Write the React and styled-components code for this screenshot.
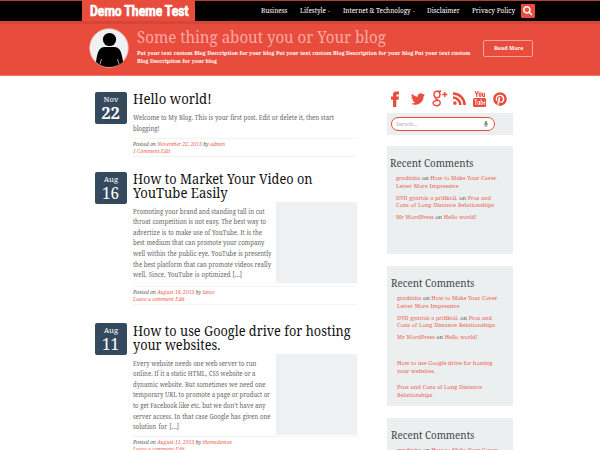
import React from 'react';
import styled, { createGlobalStyle, css } from 'styled-components';
import { FaTwitter, FaPinterest, FaSearch, FaMicrophone } from 'react-icons/fa';

// Sets a line to an exact measure with narrowed letterforms.
const measure = (w, s) => css`
  display: block; width: ${w / s}px; margin-right: ${w - w / s}px;
  white-space: nowrap; text-align-last: justify;
  transform: scaleX(${s}); transform-origin: 0 50%;
`;

const Global = createGlobalStyle`
  * { box-sizing: border-box; }
  html, body { margin: 0; height: 450px; overflow: hidden; background: #fff; }
  body { font-family: "Noto Serif", "Droid Serif", "DejaVu Serif Condensed", "DejaVu Serif", serif; font-stretch: condensed; color: #555; }
`;
const Page = styled.div`width: 600px; height: 450px; overflow: hidden;`;
const TopBar = styled.header`
  height: 21px; background: #000; border-top: 1px solid #b83a2e;
  display: flex; padding-left: 82px;
`;
const Logo = styled.div`
  width: 113px; height: 21px; margin-top: -1px; padding: 1px 0 0 8px; background: #e84c3d; color: #fff; flex: none;
  font: 700 15.5px/21px Roboto, "Liberation Sans", sans-serif;
`;
const LogoText = styled.span`${measure(97.5, 0.78)} -webkit-text-stroke: 0.7px #fff;`;
const Nav = styled.nav`display: flex; padding-left: 66px; height: 19px; align-items: center; color: #fff;`;
const NavItem = styled.a`padding-right: ${p => p.$gap}px; font-size: 7.1px; line-height: 19px;`;
const Caret = styled.i`box-sizing: content-box; width: 0; border: 1.5px solid transparent; border-top-color: #bbb; margin: 2px ${p => p.$gap}px 0 0;`;
const SearchButton = styled.button`
  width: 14px; height: 14px; margin-top: 1px; padding: 0; border: 0; border-radius: 1px; background: #e84c3d; color: #fff;
  display: flex; align-items: center; justify-content: center; font-size: 9.5px;
`;
const Hero = styled.section`
  height: 55px; background: #e84c3d; border-top: 3px solid #d54637; border-bottom: 1px solid #ee7468; padding: 4px 0 0 89px; display: flex;
`;
const Avatar = styled.svg`width: 40px; height: 40px; flex: none;`;
const HeroText = styled.div`width: 346.5px; padding-left: 7.5px; color: #fff; flex: none;`;
const HeroTitle = styled.h1`margin: 0; padding-top: 1px; font-size: 15.4px; font-weight: 400; line-height: 17px; color: #f8aaa3;`;
const HeroCopy = styled.div`padding-top: 2.5px; font-size: 5.9px; line-height: 8px; font-weight: 700;`;
const ReadMore = styled.a`
  width: 50px; height: 17px; margin: 12px 0 0 7.5px; padding-left: 10px; border: 1px solid #f7a49c; border-radius: 2px; color: #fff;
  font-size: 6px; line-height: 15px; font-weight: 700;
`;
const Content = styled.main`display: flex; padding-left: 95px;`;
const Posts = styled.div`width: 262px; padding-top: 16px; flex: none;`;
const Post = styled.article`display: flex; height: ${p => p.$h}px;`;
const DateBadge = styled.time`
  flex: none; width: 32px; height: 32px; margin-right: 5.5px; border-radius: 2px; background: #34495e; color: #fff;
  display: flex; flex-direction: column; align-items: center; padding-top: 3px;
`;
const Month = styled.span`font-size: 7.7px; line-height: 9px;`;
const Day = styled.span`
  font-size: 17px; line-height: 18px; font-weight: ${p => p.$bold ? 700 : 400};
  transform: scaleX(${p => p.$bold ? 0.98 : 0.9});
`;
const PostBody = styled.div`width: 224.5px; flex: none;`;
const Title = styled.h2`margin: 0; padding-top: ${p => p.$pad || 0}px; font-size: 13.9px; line-height: 13.8px; font-weight: 400; color: #111;`;
const Line = styled.span`${p => measure(p.$w, p.$s || 0.9)}`;
const Excerpt = styled.div`display: flex; justify-content: space-between; height: ${p => p.$h}px;`;
const Copy = styled.div`padding-top: ${p => p.$pad}px; font-size: 6.2px; line-height: 10.62px; color: #666;`;
const Thumb = styled.div`flex: none; width: 81px; height: 81px; margin-top: ${p => p.$top}px; background: #eff0f2;`;
const Meta = styled.div`
  border-top: 1px solid #f3f3f3; border-bottom: 1px solid #f3f3f3; height: 19px; padding-top: 2px;
  font-size: 5.6px; line-height: 7px; font-style: italic; color: #555;
`;
const Link = styled.a`color: #ec5b4d;`;
const Sidebar = styled.aside`width: 125.5px; margin-left: 30px; padding-top: 14px; flex: none;`;
const Socials = styled.div`
  height: 17px; display: grid; grid-template-columns: 20.5px 20.5px 21px 20.5px 20px auto; align-items: center; color: #e84c3d;
  padding: 0 0 0 3.5px; margin-bottom: 6px;
  svg { display: block; }
`;
const SearchBox = styled.div`height: 22px; background: #ebeff0; padding: 4px 0 0 3.5px; margin-bottom: 11px;`;
const Field = styled.div`
  width: 104.5px; height: 14px; border: 1px solid #e84c3d; border-radius: 7px; background: #fff; color: #aaa;
  display: flex; align-items: center; justify-content: space-between; padding: 0 5px 0 4.5px; font-size: 6px;
`;
const Panel = styled.section`height: ${p => p.$h}px; margin-bottom: 12px; background: #ebeff0; padding: 10.5px 0 0 ${p => p.$x}px;`;
const PanelTitle = styled.h3`margin: 0 0 5.5px; font-size: 10.2px; line-height: 12px; font-weight: 400; color: #444;`;
const Item = styled.div`margin: 0 0 ${p => p.$gap || 4}px 5.8px; font-size: 6.1px; line-height: 7.8px; color: #555;`;

const posts = [
  { h: 80, month: 'Nov', day: '22', bold: true, title: [['Hello world!', 75, 0.95]], copyPad: 7.5, exH: 32,
    copy: [['Welcome to My Blog. This is your first post. Edit or delete it, then start', 201], ['blogging!', 25]],
    date: 'November 22, 2013', by: 'admin', metaW: 90.5, comment: '1 Comment Edit', commentW: 37 },
  { h: 151, month: 'Aug', day: '16', title: [['How to Market Your Video on', 179.5, 0.915], ['YouTube Easily', 94, 0.94]], copyPad: 7, exH: 86, thumb: 2,
    copy: [['Promoting your brand and standing tall in cut', 131], ['throat competition is not easy. The best way to', 133], ['advertize is to make use of YouTube. It is the', 129], ['best medium that can promote your company', 131.5], ['well within the public eye. YouTube is presently', 138.5], ['the best platform that can promote videos really', 137.5], ['well. Since, YouTube is optimized […]', 109]],
    date: 'August 16, 2013', by: 'lance', metaW: 79, comment: 'Leave a comment Edit', commentW: 51 },
  { h: 151, month: 'Aug', day: '11', title: [['How to use Google drive for hosting', 217.5, 0.915], ['your websites.', 87, 0.915]], copyPad: 7, exH: 84.5, thumb: 2, titlePad: 1,
    copy: [['Every website needs one web server to run', 123.5], ['online. If it a static HTML, CSS website or a', 122.5], ['dynamic website. But sometimes we need one', 132.5], ['temporary URL to promote a page or product or', 136.5], ['to get Facebook like etc. but we don’t have any', 132.5], ['server access. In that case Google has given one', 137.5], ['solution for […]', 46]],
    date: 'August 11, 2013', by: 'themedemos', metaW: 96.5, comment: 'Leave a comment Edit', commentW: 51 },
];

function Comments() {
  return <>
    <PanelTitle><Line $w={83} $s={0.96}>Recent Comments</Line></PanelTitle>
    <Item>
      <Line $w={100} $s={0.92}><Link>gradinita</Link> on <Link>How to Make Your Cover</Link></Line>
      <Line $w={62.5}><Link>Letter More Impressive</Link></Line>
    </Item>
    <Item>
      <Line $w={95}><Link>DVD gyártás a prifiktól.</Link> on <Link>Pros and</Link></Line>
      <Line $w={98} $s={0.92}><Link>Cons of Long Distance Relationships</Link></Line>
    </Item>
    <Item $gap={18.5}><Line $w={80.5}><Link>Mr WordPress</Link> on <Link>Hello world!</Link></Line></Item>
  </>;
}

const NavLink = ({ w, gap, children }) => <NavItem $gap={gap}><Line $w={w} $s={0.9}>{children}</Line></NavItem>;

export default function App() {
  return (
    <Page>
      <Global />
      <TopBar>
        <Logo><LogoText>Demo Theme Test</LogoText></Logo>
        <Nav>
          <NavLink w={27} gap={11.5}>Business</NavLink>
          <NavLink w={25.5} gap={3}>Lifestyle</NavLink><Caret $gap={12.5} />
          <NavLink w={67.5} gap={2.5}>Internet &amp; Technology</NavLink><Caret $gap={12.5} />
          <NavLink w={34} gap={11}>Disclaimer</NavLink>
          <NavLink w={43} gap={6}>Privacy Policy</NavLink>
          <SearchButton aria-label="Search"><FaSearch /></SearchButton>
        </Nav>
      </TopBar>
      <Hero>
        <Avatar viewBox="0 0 40 40">
          <circle cx="20" cy="20" r="19.3" fill="#f0f1f3" stroke="#f8b1aa" strokeWidth=".8" />
          <circle cx="20.5" cy="11.5" r="6.6" />
          <path d="M7 34 Q8 25 10.5 21.5 Q12 19 15 19 H26 Q29 19 30.5 21.5 Q33 25 34 34 Q28 39 20 39 Q12 39 7 34Z" />
          <path d="M12.5 31 L11 36 M28.5 31 L30 36" stroke="#f0f1f3" strokeWidth=".7" />
        </Avatar>
        <HeroText>
          <HeroTitle><Line $w={248.5} $s={0.98}>Some thing about you or Your blog</Line></HeroTitle>
          <HeroCopy>
            <Line $w={333.5} $s={0.89}>Put your text custom Blog Description for your blog Put your text custom Blog Description for your blog Put your text custom</Line>
            <Line $w={79.5} $s={0.89}>Blog Description for your blog</Line>
          </HeroCopy>
        </HeroText>
        <ReadMore><Line $w={29}>Read More</Line></ReadMore>
      </Hero>
      <Content>
        <Posts>
          {posts.map(p => (
            <Post key={p.date} $h={p.h}>
              <DateBadge><Month>{p.month}</Month><Day $bold={p.bold}>{p.day}</Day></DateBadge>
              <PostBody>
                <Title $pad={p.titlePad}>{p.title.map(([t, w, s]) => <Line key={t} $w={w} $s={s}>{t}</Line>)}</Title>
                <Excerpt $h={p.exH}>
                  <Copy $pad={p.copyPad}>{p.copy.map(([t, w]) => <Line key={t} $w={w} $s={0.97}>{t}</Line>)}</Copy>
                  {p.thumb && <Thumb $top={p.thumb} />}
                </Excerpt>
                <Meta>
                  <Line $w={p.metaW} $s={0.9}>Posted on <Link>{p.date}</Link> by <Link>{p.by}</Link></Line>
                  <Line $w={p.commentW} $s={0.9}><Link>{p.comment}</Link></Line>
                </Meta>
              </PostBody>
            </Post>
          ))}
        </Posts>
        <Sidebar>
          <Socials>
            <svg width="9" height="16" viewBox="0 0 9 16" fill="#e84c3d">
              <path d="M2 16V8.7H0V5.6H2V3.8Q2 .5 5.4 .5H8V3.5H6.3Q5.3 3.5 5.3 4.5V5.6H8L7.6 8.7H5.3V16Z" />
            </svg>
            <FaTwitter size={14} />
            <svg width="16" height="17" viewBox="0 0 16 17" fill="none" stroke="#e84c3d" strokeWidth="1.4">
              <path d="M9.3 1.2H5.2M5.2 1.2C3 1.2 2 2.6 2 4.4S3 7.6 5 7.6 8 6.2 8 4.4 7.2 1.2 5.2 1.2M4.6 7.6C3.2 9 4.2 9.6 6 10.2 9.6 11.4 8.6 15.8 4.8 15.8S.2 12.5 2.4 11.2Q4 10.3 6 10.2M12.8 2V7M10.2 4.5H15.4" />
            </svg>
            <svg width="13" height="13" viewBox="0 0 13 13" fill="none" stroke="#e84c3d" strokeWidth="2.5">
              <circle cx="1.9" cy="11.1" r="1.8" fill="#e84c3d" stroke="none" />
              <path d="M0 5.6A7.4 7.4 0 0 1 7.4 13M0 1.4A11.6 11.6 0 0 1 11.6 13" />
            </svg>
            <svg width="13" height="16" viewBox="0 0 13 16">
              <path d="M2 0 3.7 3.5V6M5.3 0 3.7 3.5M6.2 2.3Q7.2 1.2 8 2.3V4.7Q7.1 6 6.2 4.7ZM9.5 1.7V5Q10.3 6 11.4 4.8V1.7V6" fill="none" stroke="#e84c3d" strokeWidth="1.1" />
              <rect y="7" width="13" height="9" rx="1.5" fill="#e84c3d" />
              <path d="M1.2 8.8H4.2M2.7 8.8V14M4.8 10V13.3Q5.8 14 6.6 13V10V14M8 8V14M8 10.5Q9.4 9.8 9.4 11V13Q9 14 8 13.4M12 13Q10.7 14.6 10.7 12.5V11Q12 9.5 12 12H10.7" fill="none" stroke="#fff" strokeWidth=".7" />
            </svg>
            <FaPinterest size={14} />
          </Socials>
          <SearchBox><Field><Line $w={22}>Serach...</Line><FaMicrophone size={6} color="#888" /></Field></SearchBox>
          <Panel $h={108} $x={3}><Comments /></Panel>
          <Panel $h={140} $x={4}>
            <Comments />
            <Item $gap={8}><Line $w={95} $s={0.92}><Link>How to use Google drive for hosting</Link></Line><Line $w={38}><Link>your websites.</Link></Line></Item>
            <Item><Line $w={85} $s={0.92}><Link>Pros and Cons of Long Distance</Link></Line><Line $w={36}><Link>Relationships</Link></Line></Item>
          </Panel>
          <Panel $h={60} $x={4}><Comments /></Panel>
        </Sidebar>
      </Content>
    </Page>
  );
}
